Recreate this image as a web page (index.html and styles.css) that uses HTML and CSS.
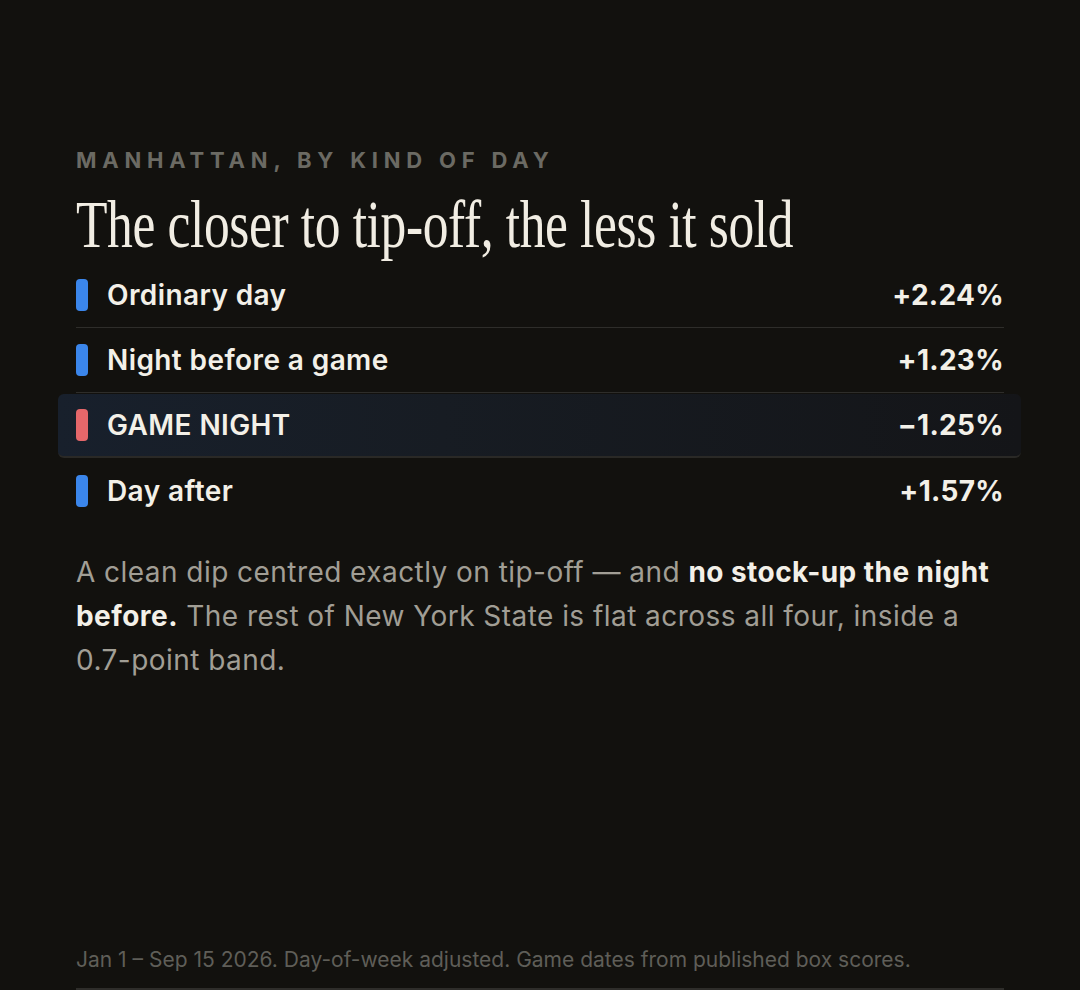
FILE: index.html
```html
<!DOCTYPE html>
<html lang="en">
<head>
<meta charset="utf-8">
<title>Manhattan, by kind of day</title>
<link rel="stylesheet" href="styles.css">
</head>
<body>
<main class="card">
  <p class="kicker">MANHATTAN, BY KIND OF DAY</p>
  <h1 class="title"><span>The closer to tip-off, the less it sold</span></h1>
  <ul class="rows">
    <li class="row"><span class="swatch up"></span><span class="name">Ordinary day</span><span class="val">+2.24%</span></li>
    <li class="row"><span class="swatch up"></span><span class="name">Night before a game</span><span class="val">+1.23%</span></li>
    <li class="row hl"><span class="swatch down"></span><span class="name">GAME NIGHT</span><span class="val">−1.25%</span></li>
    <li class="row last"><span class="swatch up"></span><span class="name">Day after</span><span class="val">+1.57%</span></li>
  </ul>
  <p class="note">A clean dip centred exactly on tip-off — and <strong>no stock-up the night before.</strong> The rest of New York State is flat across all four, inside a <span class="nw">0.7-point</span> band.</p>
  <footer class="foot">Jan 1 – Sep 15 2026. Day-of-week adjusted. Game dates from published box scores.</footer>
</main>
</body>
</html>
```
FILE: styles.css
```css
* { box-sizing: border-box; }
html, body { margin: 0; padding: 0; }
body {
  background: #12110e;
  font-family: Inter, "Noto Sans", sans-serif;
  color: #f3f0e8;
  height: 990px;
  overflow: hidden;
}
.card {
  width: 928px;
  margin-left: 76px;
  height: 990px;
  display: flex;
  flex-direction: column;
  padding-top: 146px;
  border-bottom: 2px solid #2e2d2a;
}
.kicker {
  margin: 0;
  font-size: 22px;
  font-weight: 700;
  letter-spacing: 5.8px;
  color: #6b6a63;
  line-height: 28px;
}
.title {
  margin: 17px 0 0;
  font-family: "Liberation Serif", serif;
  font-weight: 400;
  font-size: 68px;
  line-height: 66px;
  white-space: nowrap;
  color: #f1ede3;
}
.title span {
  display: inline-block;
  transform: scaleX(0.758);
  transform-origin: left center;
  letter-spacing: -0.5px;
}
.rows {
  list-style: none;
  margin: 6px 0 0;
  padding: 0;
}
.row {
  display: flex;
  align-items: center;
  height: 65px;
  border-bottom: 1px solid #2e2d2a;
}
.row.last { border-bottom: none; }
.row.hl {
  margin: 1px -17px 0 -18px;
  height: 64px;
  padding: 0 17px 0 18px;
  border-radius: 6px;
  background: linear-gradient(90deg, #18202c 0%, #171c23 40%, #141518 100%);
  border-bottom: 2px solid #2a2926;
}
.swatch {
  width: 12px;
  height: 32px;
  border-radius: 4px;
  margin-right: 19px;
  flex: none;
}
.swatch.up { background: #3b86eb; }
.swatch.down { background: #e5676a; }
.name {
  flex: 1;
  font-size: 28px;
  font-weight: 600;
  letter-spacing: 0.4px;
}
.val {
  font-size: 28px;
  font-weight: 700;
  letter-spacing: 0.3px;
}
.note {
  margin: 27px 0 0;
  font-size: 28px;
  line-height: 44px;
  color: #a19e95;
  font-weight: 400;
  letter-spacing: 0.45px;
}
.note strong { color: #f3f0e8; font-weight: 700; }
.nw { white-space: nowrap; }
.foot {
  margin-top: auto;
  padding-bottom: 16px;
  font-size: 21px;
  color: #5f5e58;
}
```
